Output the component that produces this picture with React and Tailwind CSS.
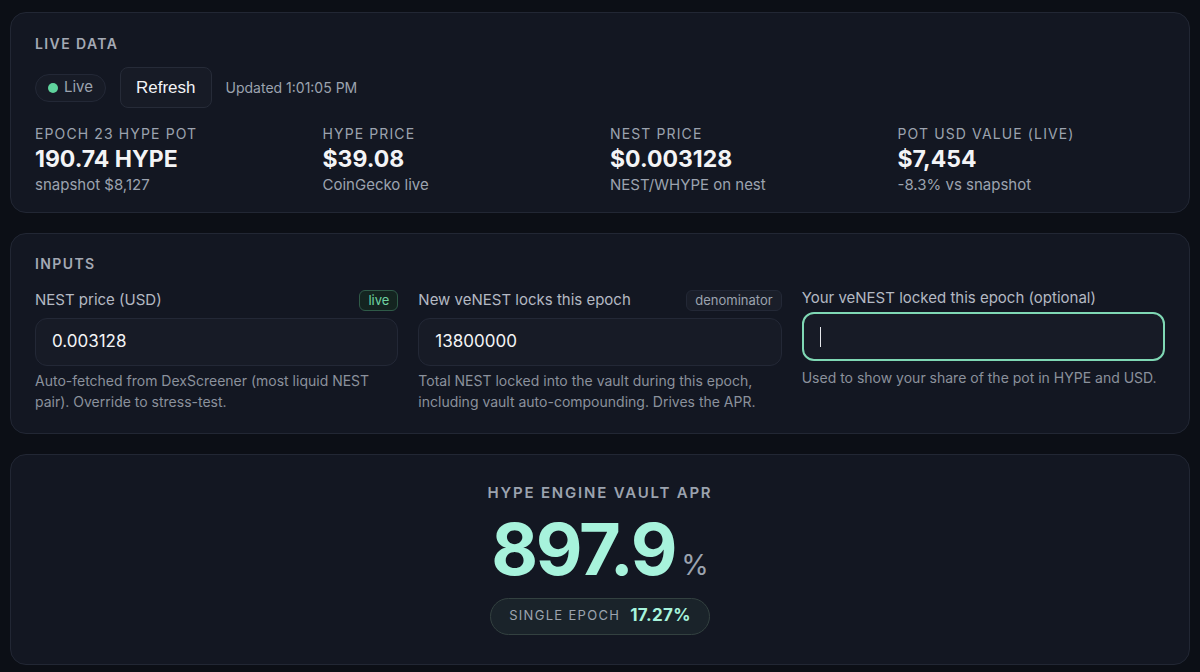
import { useState } from "react";

function Stat({ label, value, sub }) {
  return (
    <div>
      <div className="text-[14px] leading-5 tracking-[0.08em] text-[#9ca3af]">{label}</div>
      <div className="text-[23px] leading-7 font-bold text-[#f3f4f6] mt-px">{value}</div>
      <div className="text-[15px] leading-5 text-[#9ca3af] mt-0.5">{sub}</div>
    </div>
  );
}

function Field({ label, badge, badgeClass, value, help, focused }) {
  return (
    <div>
      <div className={"flex items-center justify-between " + (focused ? "h-5 mb-1" : "h-6 mb-1.5")}>
        <span className="text-[15px] text-[#b4b9c3]">{label}</span>
        {badge && (
          <span className={"text-[13px] leading-[19px] px-2 rounded-md border " + badgeClass}>{badge}</span>
        )}
      </div>
      <div
        className={
          "rounded-xl bg-[#171b26] flex items-center px-4 text-[17px] text-[#f3f4f6] " +
          (focused ? "h-[49px] border-2 border-[#7fd8b4]" : "h-[48px] border border-[#232836]")
        }
      >
        {focused ? <span className="w-px h-5 bg-[#e5e7eb]" /> : value}
      </div>
      <p className={"text-[14px] leading-[21px] text-[#8b919c] " + (focused ? "mt-1.5" : "mt-1")}>{help}</p>
    </div>
  );
}

export default function App() {
  const [updated] = useState("1:01:05 PM");

  return (
    <div className="min-h-screen bg-[#0c0f16] px-[10px] pt-3 pb-2 flex flex-col gap-5" style={{ fontFamily: "Inter, 'Noto Sans', sans-serif" }}>
      <section className="h-[201px] rounded-2xl border border-[#222734] bg-[#131722] px-6 pt-5">
        <h2 className="text-[14px] font-semibold tracking-[0.1em] text-[#a4a9b4]">LIVE DATA</h2>
        <div className="flex items-center mt-[13px] gap-3.5">
          <span className="flex items-center gap-1.5 h-7 px-3 rounded-full border border-[#232836] bg-[#171b26] text-[15px] text-[#9ca3af]">
            <span className="w-2.5 h-2.5 rounded-full bg-[#5fd39d]" />
            Live
          </span>
          <button className="h-[41px] px-[15px] rounded-lg border border-[#262b38] bg-[#171b26] text-[17px] text-[#f3f4f6]" style={{ fontFamily: "'Liberation Sans', Arial, sans-serif" }}>
            Refresh
          </button>
          <span className="text-[14px] text-[#9ca3af]">Updated {updated}</span>
        </div>
        <div className="grid grid-cols-4 gap-5 mt-4">
          <Stat label="EPOCH 23 HYPE POT" value="190.74 HYPE" sub="snapshot $8,127" />
          <Stat label="HYPE PRICE" value="$39.08" sub="CoinGecko live" />
          <Stat label="NEST PRICE" value="$0.003128" sub="NEST/WHYPE on nest" />
          <Stat label="POT USD VALUE (LIVE)" value="$7,454" sub="-8.3% vs snapshot" />
        </div>
      </section>

      <section className="h-[201px] rounded-2xl border border-[#222734] bg-[#131722] px-6 pt-[19px]">
        <h2 className="text-[14px] font-semibold tracking-[0.1em] text-[#a4a9b4]">INPUTS</h2>
        <div className="grid grid-cols-3 gap-5 mt-3.5">
          <Field
            label="NEST price (USD)"
            badge="live"
            badgeClass="border-[#2f5a48] bg-[#142420] text-[#6fd3a2]"
            value="0.003128"
            help="Auto-fetched from DexScreener (most liquid NEST pair). Override to stress-test."
          />
          <Field
            label="New veNEST locks this epoch"
            badge="denominator"
            badgeClass="border-[#232836] bg-[#1a1e29] text-[#9ca3af]"
            value="13800000"
            help="Total NEST locked into the vault during this epoch, including vault auto-compounding. Drives the APR."
          />
          <Field
            label="Your veNEST locked this epoch (optional)"
            focused
            help="Used to show your share of the pot in HYPE and USD."
          />
        </div>
      </section>

      <section className="h-[211px] rounded-2xl border border-[#222734] bg-[#131722] flex flex-col items-center pt-[27px]">
        <h2 className="text-[15px] font-semibold tracking-[0.12em] text-[#9ca3af]">HYPE ENGINE VAULT APR</h2>
        <div className="flex items-baseline mt-1">
          <span className="text-[72px] leading-[80px] font-bold tracking-[-0.03em] text-[#a7f3dc]">897.9</span>
          <span className="text-[28px] text-[#9ca3af] ml-1.5">%</span>
        </div>
        <div className="mt-[9px] h-[37px] px-[18px] rounded-full border border-[#334140] bg-[#1a232a] flex items-center gap-2.5">
          <span className="text-[13px] tracking-[0.1em] text-[#9ca3af]">SINGLE EPOCH</span>
          <span className="text-[17px] font-bold tracking-[0.02em] text-[#a7f3dc]">17.27%</span>
        </div>
      </section>
    </div>
  );
}
